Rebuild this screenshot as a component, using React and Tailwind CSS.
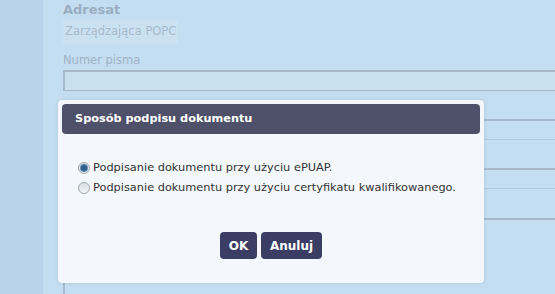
import React, { useState } from "react";

const font = { fontFamily: '"DejaVu Sans", Verdana, sans-serif' };

function Radio({ checked }) {
  return (
    <span className="flex h-[12px] w-[12px] shrink-0 items-center justify-center rounded-full border border-[#9ea6ae] bg-gradient-to-b from-[#d9dee3] to-[#f2f4f6]">
      {checked && (
        <span className="h-[6px] w-[6px] rounded-full bg-[#2f5f8a] shadow-[0_0_0_1px_#5e88ad]" />
      )}
    </span>
  );
}

export default function App() {
  const [choice, setChoice] = useState("epuap");

  const options = [
    { id: "epuap", label: "Podpisanie dokumentu przy użyciu ePUAP." },
    { id: "cert", label: "Podpisanie dokumentu przy użyciu certyfikatu kwalifikowanego." },
  ];

  return (
    <div className="relative h-[294px] w-[555px] overflow-hidden bg-[#c4ddf0]" style={font}>
      <div className="flex h-full">
        <div className="w-[43px] shrink-0 bg-[#b9d4ea]" />
        <div className="flex-1 pl-[20px]">
          <p className="mt-[1px] text-[13px] font-bold leading-[17px] text-[#9aaec2]">Adresat</p>
          <div className="mt-[2px] flex h-[24px] w-[115px] items-center bg-[#cae1f2] pl-[2px] text-[11.5px] text-[#a8bbcc]">
            Zarządzająca POPC
          </div>
          <p className="mt-[9px] text-[11.5px] leading-[15px] text-[#a0b4c7]">Numer pisma</p>
          <div className="mt-[2px] h-[21px] border-t-2 border-l-2 border-b border-[#a6b9cb] bg-[#c9e0f1]" />
          <div className="mt-[28px] h-[21px] border-t-2 border-b border-[#a6b9cb] border-b-[#b3c8da]" />
          <div className="mt-[28px] h-[21px] border-t-2 border-b border-[#a6b9cb] border-b-[#b3c8da]" />
          <div className="mt-[29px] h-[80px] border-t-2 border-l-2 border-[#a6b9cb]" />
        </div>
      </div>

      <div className="absolute left-[58px] top-[100px] flex h-[183px] w-[426px] flex-col rounded-[4px] bg-[#f4f8fc] p-[4px] shadow-[0_0_3px_rgba(120,150,180,0.35)]">
        <div className="flex h-[30px] shrink-0 items-center rounded-[4px] bg-[#4f5069] pl-[13px] text-[11.3px] font-bold text-white">
          Sposób podpisu dokumentu
        </div>
        <div className="mt-[24px] flex flex-col pl-[16px]">
          {options.map((o) => (
            <label
              key={o.id}
              className="flex h-[20px] cursor-pointer items-center gap-[3px] text-[11.35px] text-[#333]"
              onClick={() => setChoice(o.id)}
            >
              <Radio checked={choice === o.id} />
              <span>{o.label}</span>
            </label>
          ))}
        </div>
        <div className="mt-[34px] flex justify-center gap-[4px]">
          <button className="h-[27px] w-[37px] rounded-[4px] bg-[#3b3d64] text-[12px] font-bold text-white">
            OK
          </button>
          <button className="h-[27px] w-[61px] rounded-[4px] bg-[#3b3d64] text-[12px] font-bold text-white">
            Anuluj
          </button>
        </div>
      </div>
    </div>
  );
}
